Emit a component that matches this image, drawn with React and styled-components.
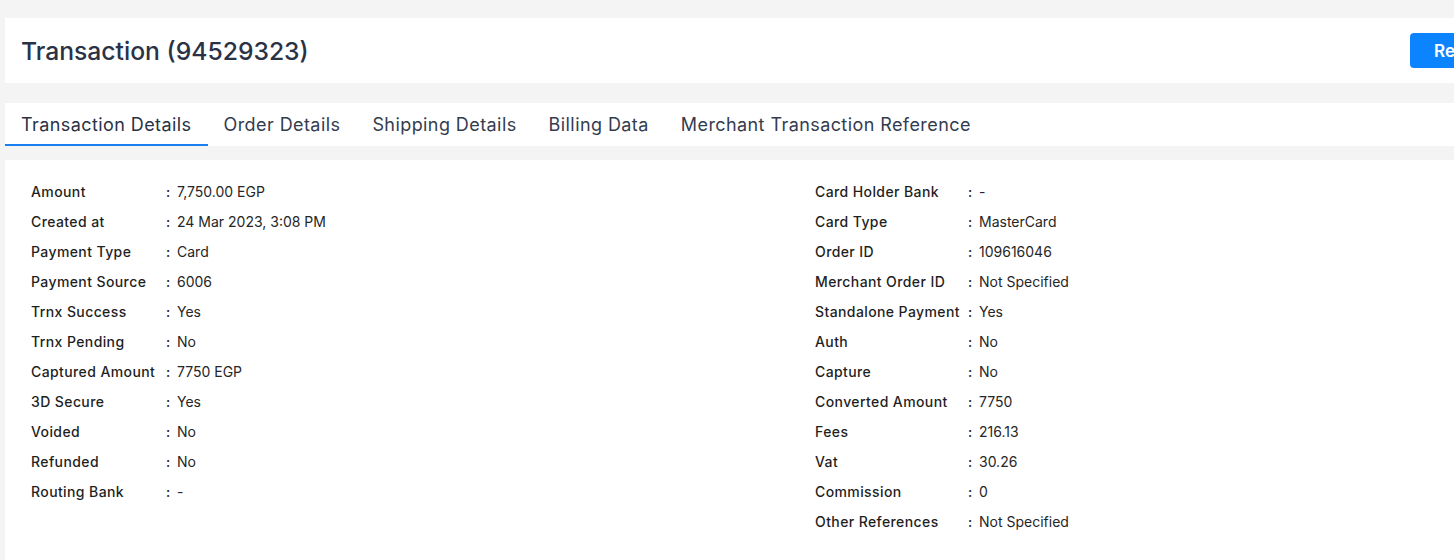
import React, { useState } from 'react';
import styled, { createGlobalStyle } from 'styled-components';

const GlobalStyle = createGlobalStyle`
    html, body {
        margin: 0;
        padding: 0;
        background: #f4f4f4;
        overflow-x: hidden;
    }
    * {
        box-sizing: border-box;
    }
`;

const Page = styled.div`
    width: 1533px;
    padding: 18px 0 0 5px;
    font-family: Inter, "Noto Sans", sans-serif;
    display: flex;
    flex-direction: column;
`;

const HeaderCard = styled.header`
    background: #fff;
    height: 65px;
    padding: 0 16px;
    display: flex;
    align-items: center;
    justify-content: space-between;
`;

const Title = styled.h1`
    margin: 0;
    font-size: 24.7px;
    font-weight: 500;
    color: #2a3246;
`;

const ActionButton = styled.button`
    height: 35px;
    padding: 0 24px;
    border: none;
    border-radius: 4px;
    background: #0d84ff;
    color: #fff;
    font-family: inherit;
    font-size: 17px;
    font-weight: 600;
    cursor: pointer;
`;

const TabBar = styled.nav`
    margin-top: 20px;
    background: #fff;
    height: 43px;
    display: flex;
`;

const Tab = styled.button`
    border: none;
    background: none;
    padding: 2px 16px 0;
    font-family: inherit;
    font-size: 18px;
    font-weight: 400;
    letter-spacing: 0.42px;
    color: ${p => (p.$active ? '#2a3246' : '#343c50')};
    border-bottom: 2px solid ${p => (p.$active ? '#1a7ff0' : 'transparent')};
    cursor: pointer;
`;

const DetailsCard = styled.section`
    margin-top: 14px;
    background: #fff;
    padding: 16px 26px 40px;
    display: grid;
    grid-template-columns: 784px 1fr;
`;

const InfoList = styled.dl`
    margin: 0;
    display: grid;
    grid-template-columns: ${p => p.$labelWidth}px 11px 1fr;
    grid-auto-rows: 30px;
    align-items: center;
    font-size: 14px;
    color: #1f1f1f;
`;

const Label = styled.dt`
    font-weight: 500;
    letter-spacing: 0.4px;
`;

const Colon = styled.span`
    font-weight: 500;
`;

const Value = styled.dd`
    margin: 0;
    font-weight: 400;
    color: #262626;
`;

const leftRows = [
    ['Amount', '7,750.00 EGP'],
    ['Created at', '24 Mar 2023, 3:08 PM'],
    ['Payment Type', 'Card'],
    ['Payment Source', '6006'],
    ['Trnx Success', 'Yes'],
    ['Trnx Pending', 'No'],
    ['Captured Amount', '7750 EGP'],
    ['3D Secure', 'Yes'],
    ['Voided', 'No'],
    ['Refunded', 'No'],
    ['Routing Bank', '-'],
];

const rightRows = [
    ['Card Holder Bank', '-'],
    ['Card Type', 'MasterCard'],
    ['Order ID', '109616046'],
    ['Merchant Order ID', 'Not Specified'],
    ['Standalone Payment', 'Yes'],
    ['Auth', 'No'],
    ['Capture', 'No'],
    ['Converted Amount', '7750'],
    ['Fees', '216.13'],
    ['Vat', '30.26'],
    ['Commission', '0'],
    ['Other References', 'Not Specified'],
];

const tabs = [
    'Transaction Details',
    'Order Details',
    'Shipping Details',
    'Billing Data',
    'Merchant Transaction Reference',
];

function Info({ rows, labelWidth }) {
    return (
        <InfoList $labelWidth={labelWidth}>
            {rows.map(([label, value]) => (
                <React.Fragment key={label}>
                    <Label>{label}</Label>
                    <Colon>:</Colon>
                    <Value>{value}</Value>
                </React.Fragment>
            ))}
        </InfoList>
    );
}

function App() {
    const [activeTab, setActiveTab] = useState(0);

    return (
        <>
            <GlobalStyle />
            <Page>
                <HeaderCard>
                    <Title>Transaction (94529323)</Title>
                    <ActionButton>Refund</ActionButton>
                </HeaderCard>
                <TabBar>
                    {tabs.map((tab, i) => (
                        <Tab key={tab} $active={i === activeTab} onClick={() => setActiveTab(i)}>
                            {tab}
                        </Tab>
                    ))}
                </TabBar>
                <DetailsCard>
                    <Info rows={leftRows} labelWidth={135} />
                    <Info rows={rightRows} labelWidth={153} />
                </DetailsCard>
            </Page>
        </>
    );
}

export default App;
